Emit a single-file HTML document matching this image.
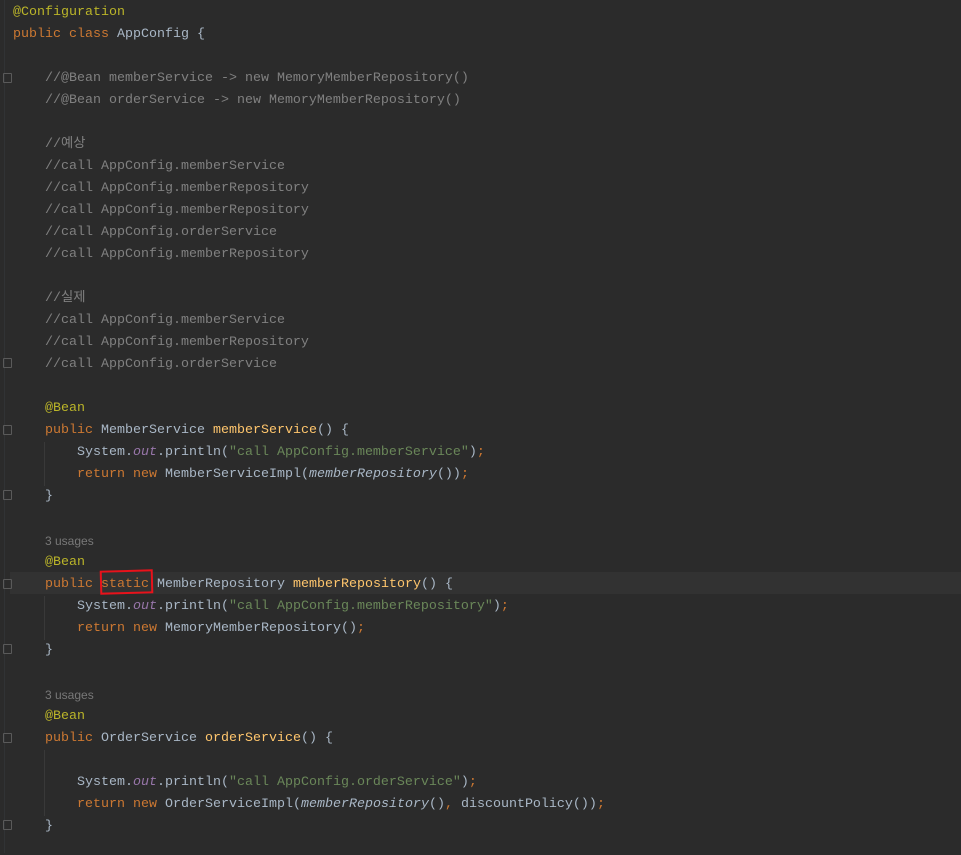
<!DOCTYPE html>
<html><head><meta charset="utf-8"><style>
html,body{margin:0;padding:0;background:#2b2b2b;width:961px;height:853px;overflow:hidden}
#w{position:absolute;left:0;top:2px;width:961px;height:853px}
.l{position:absolute;left:13px;height:22px;line-height:22px;white-space:pre;font-family:"Liberation Mono","Noto Sans CJK KR",monospace;font-size:13.33px;color:#a9b7c6}
.k{color:#cc7832}.a{color:#bbb529}.c{color:#808080}.m{color:#ffc66d}.s{color:#6a8759}.f{color:#9876aa;font-style:italic}.i{font-style:italic}
.u{position:absolute;left:45px;font-family:"Liberation Sans",sans-serif;font-size:12px;color:#787878;height:22px;line-height:22px}
.hl{position:absolute;left:10px;width:951px;top:570px;height:22px;background:#323232}
.g{position:absolute;width:1px;background:#393939}
.fold{position:absolute;left:3px;width:7px;height:8px;border:1px solid #5a5a5a;border-radius:1px}
</style></head><body>
<div class="g" style="left:4px;top:0;height:853px;background:#313335"></div>
<div id="w">
<div class="hl"></div>
<div class="g" style="left:44px;top:440px;height:44px"></div>
<div class="g" style="left:44px;top:594px;height:44px"></div>
<div class="g" style="left:44px;top:748px;height:66px"></div>
<div class="fold" style="top:71px"></div>
<div class="fold" style="top:356px"></div>
<div class="fold" style="top:423px"></div>
<div class="fold" style="top:488px"></div>
<div class="fold" style="top:577px"></div>
<div class="fold" style="top:642px"></div>
<div class="fold" style="top:731px"></div>
<div class="fold" style="top:818px"></div>

<div class="l a" style="top:0">@Configuration</div>
<div class="l" style="top:22px"><span class="k">public class </span>AppConfig {</div>
<div class="l c" style="top:66px">    //@Bean memberService -&gt; new MemoryMemberRepository()</div>
<div class="l c" style="top:88px">    //@Bean orderService -&gt; new MemoryMemberRepository()</div>
<div class="l c" style="top:132px">    //예상</div>
<div class="l c" style="top:154px">    //call AppConfig.memberService</div>
<div class="l c" style="top:176px">    //call AppConfig.memberRepository</div>
<div class="l c" style="top:198px">    //call AppConfig.memberRepository</div>
<div class="l c" style="top:220px">    //call AppConfig.orderService</div>
<div class="l c" style="top:242px">    //call AppConfig.memberRepository</div>
<div class="l c" style="top:286px">    //실제</div>
<div class="l c" style="top:308px">    //call AppConfig.memberService</div>
<div class="l c" style="top:330px">    //call AppConfig.memberRepository</div>
<div class="l c" style="top:352px">    //call AppConfig.orderService</div>
<div class="l a" style="top:396px">    @Bean</div>
<div class="l" style="top:418px">    <span class="k">public </span>MemberService <span class="m">memberService</span>() {</div>
<div class="l" style="top:440px">        System.<span class="f">out</span>.println(<span class="s">"call AppConfig.memberService"</span>)<span class="k">;</span></div>
<div class="l" style="top:462px">        <span class="k">return new </span>MemberServiceImpl(<span class="i">memberRepository</span>())<span class="k">;</span></div>
<div class="l" style="top:484px">    }</div>
<div class="u" style="top:528px">3 usages</div>
<div class="l a" style="top:550px">    @Bean</div>
<div class="l" style="top:572px">    <span class="k">public static </span>MemberRepository <span class="m">memberRepository</span>() {</div>
<div class="l" style="top:594px">        System.<span class="f">out</span>.println(<span class="s">"call AppConfig.memberRepository"</span>)<span class="k">;</span></div>
<div class="l" style="top:616px">        <span class="k">return new </span>MemoryMemberRepository()<span class="k">;</span></div>
<div class="l" style="top:638px">    }</div>
<div class="u" style="top:682px">3 usages</div>
<div class="l a" style="top:704px">    @Bean</div>
<div class="l" style="top:726px">    <span class="k">public </span>OrderService <span class="m">orderService</span>() {</div>
<div class="l" style="top:770px">        System.<span class="f">out</span>.println(<span class="s">"call AppConfig.orderService"</span>)<span class="k">;</span></div>
<div class="l" style="top:792px">        <span class="k">return new </span>OrderServiceImpl(<span class="i">memberRepository</span>()<span class="k">, </span>discountPolicy())<span class="k">;</span></div>
<div class="l" style="top:814px">    }</div>
<div style="position:absolute;left:100px;top:568px;width:49px;height:20px;border:2px solid #e8121b;transform:rotate(-1.5deg)"></div>
</div>
</body></html>
